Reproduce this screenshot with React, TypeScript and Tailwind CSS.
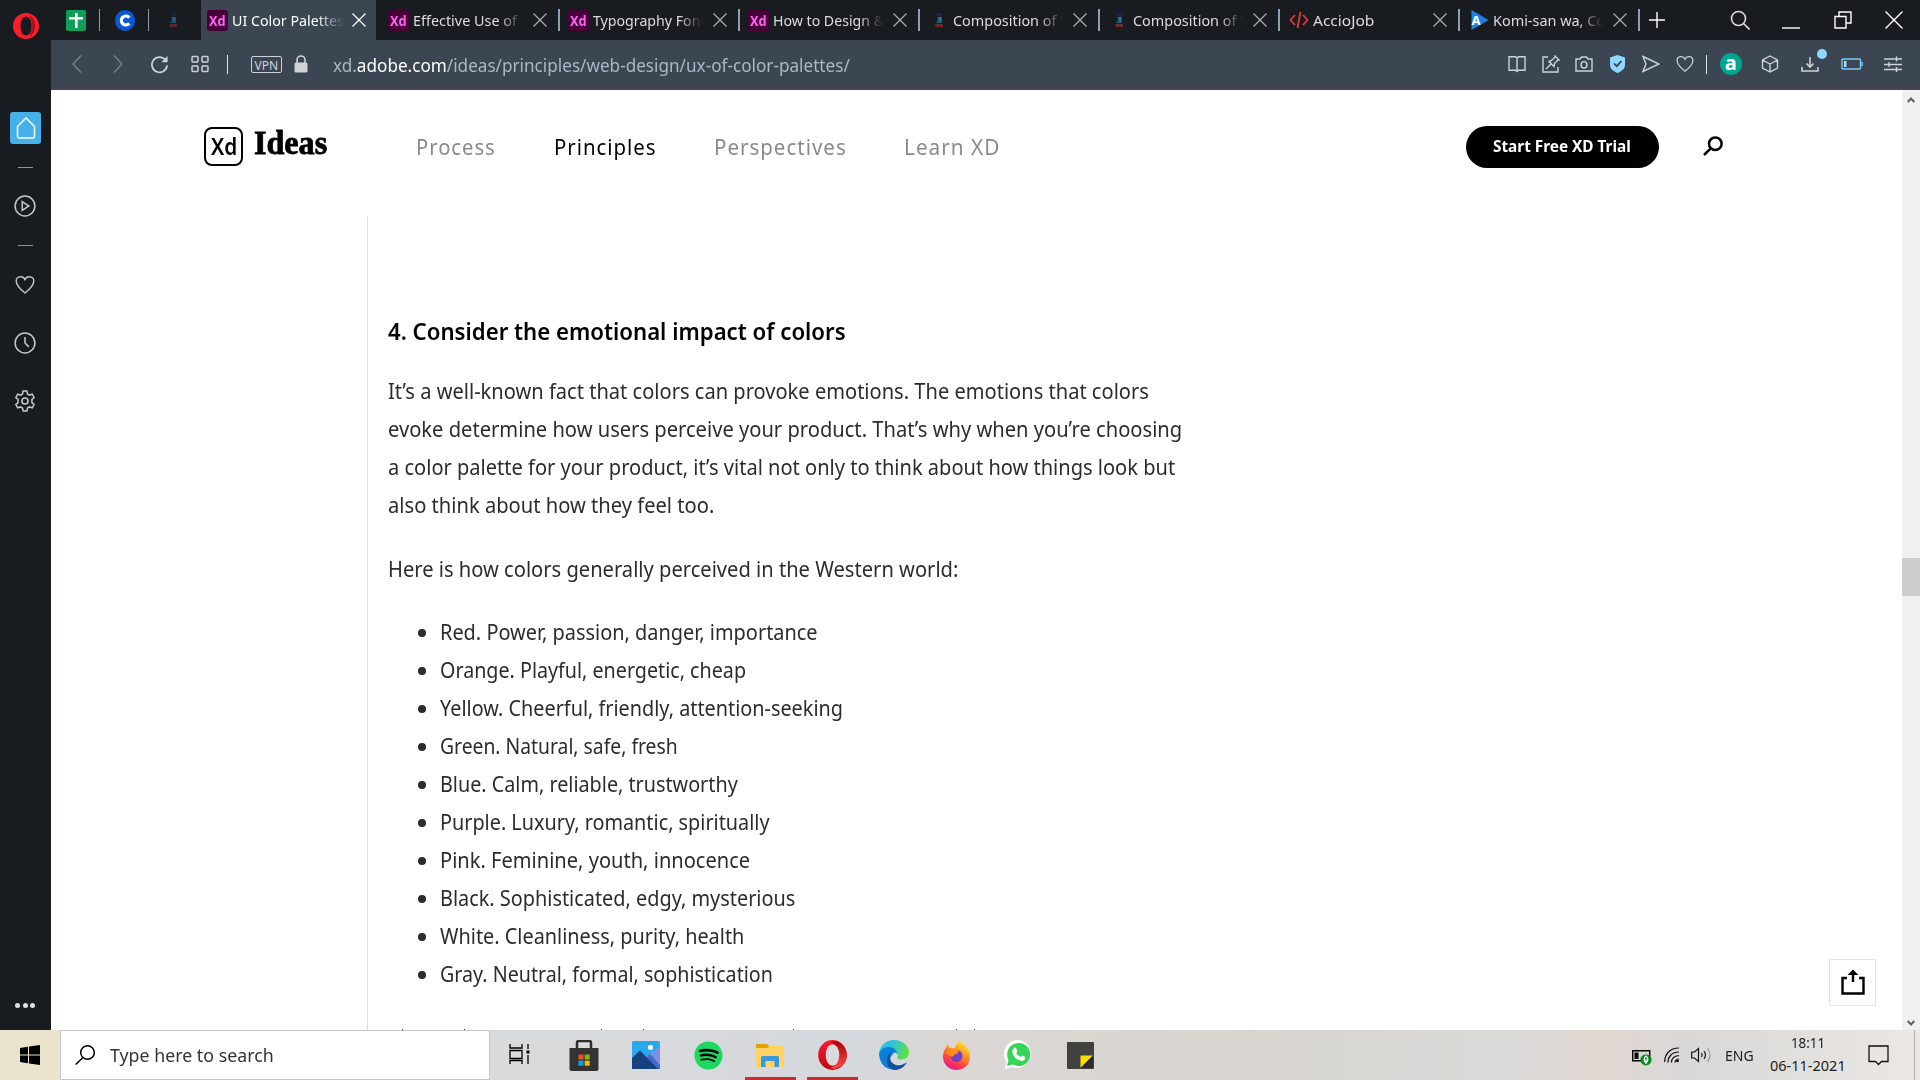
import React, { useLayoutEffect, useRef, useState } from "react";
import type { ReactNode } from "react";
import { FaSpotify } from "react-icons/fa";

/* Text condensed or widened horizontally to a given width. */
function Fit({ w, className = "", children }: { w: number; className?: string; children: ReactNode }) {
  const ref = useRef<HTMLSpanElement>(null);
  const [k, setK] = useState(1);
  useLayoutEffect(() => {
    if (ref.current) setK(w / ref.current.offsetWidth);
  }, [w]);
  return (
    <span className="inline-block shrink-0" style={{ width: w }}>
      <span ref={ref} className={"inline-block origin-left whitespace-pre " + className} style={{ transform: `scaleX(${k})` }}>
        {children}
      </span>
    </span>
  );
}

function Line({ children, size = 20, w = 1.4, className = "", box = "0 0 20 20" }: { children: ReactNode; size?: number; w?: number; className?: string; box?: string }) {
  return (
    <svg width={size} height={size} viewBox={box} fill="none" stroke="currentColor" strokeWidth={w} className={"shrink-0 " + className}>
      {children}
    </svg>
  );
}

const Heart = () => <path d="M10 18 C7 15.5 1.2 11 1.2 6 C1.2 1.2 8 .2 10 4.6 C12 .2 18.8 1.2 18.8 6 C18.8 11 13 15.5 10 18Z" />;

function XdIcon() {
  return (
    <span className="flex h-[21px] w-[21px] shrink-0 items-center justify-center rounded-[3px] bg-[#470137]">
      <Fit w={17} className="text-[15px] leading-[18px] font-bold text-[#ff61f6]">Xd</Fit>
    </span>
  );
}

function Figure() {
  return (
    <svg width="10" height="16" viewBox="0 0 10 16" className="shrink-0">
      <path d="M1 1h7l1 3H3z" fill="#14284f" />
      <path d="M3 5h5v6H2l2-3z" fill="#1a5a83" />
      <path d="M5 5h2v4H5z" fill="#2478a5" />
      <path d="M1 12h8v3H2z" fill="#6e2a2c" />
    </svg>
  );
}

function Close({ active = false }: { active?: boolean }) {
  return (
    <Line size={14} box="0 0 14 14" w={1.3} className={active ? "text-white" : "text-[#a9acaf]"}>
      <path d="M.5 .5 13.5 13.5M13.5 .5 .5 13.5" />
    </Line>
  );
}

const tabs: { icon: ReactNode; text: string; w: number }[] = [
  { icon: <XdIcon />, text: "Effective Use of D", w: 118 },
  { icon: <XdIcon />, text: "Typography Fonts", w: 119 },
  { icon: <XdIcon />, text: "How to Design & ", w: 115 },
  { icon: <span className="flex w-[21px] justify-center"><Figure /></span>, text: "Composition of W", w: 121 },
  { icon: <span className="flex w-[21px] justify-center"><Figure /></span>, text: "Composition of W", w: 121 },
  {
    icon: (
      <svg width="20" height="18" viewBox="0 0 20 18" fill="none" stroke="#e5393c" strokeWidth="1.800"><path d="M6 4 1.5 9 6 14M14 4l4.500 5L14 14M11.500 1 8.500 17" /></svg>
    ),
    text: "AccioJob", w: 61,
  },
  {
    icon: (
      <span className="relative ml-[2px] flex h-[20px] w-[18px] items-center">
        <svg width="18" height="20" viewBox="0 0 18 20" className="absolute inset-0"><path d="M.5 0 17.500 10 .5 20z" fill="#1c82e8" /></svg>
        <span className="relative ml-[1px] text-[13px] leading-[20px] font-bold text-white">A</span>
      </span>
    ),
    text: "Komi-san wa, Com", w: 126,
  },
];

function TabBar() {
  return (
    <div className="flex h-[40px] items-center bg-[#181b20] text-[15px] leading-[20px] text-[#dcdcdc]">
      <div className="flex h-[22px] w-[49px] items-center justify-center border-r border-[#8e9aa7] pl-[2px]">
        <svg width="20" height="21" viewBox="0 0 20 21"><rect width="20" height="21" rx="2" fill="#0f9d58" /><path d="M9 3h2.600v4H17v2.500h-5.400V18H9V9.500H3V7h6z" fill="#fff" /></svg>
      </div>
      <div className="flex h-[22px] w-[49px] items-center justify-center border-r border-[#8e9aa7] pl-[2px]">
        <span className="flex h-[21px] w-[20px] items-center justify-center rounded-full bg-[#0b57d9]">
          <svg width="12" height="13" viewBox="0 0 12 13" fill="none" stroke="#fff" strokeWidth="3.200"><path d="M10.300 3.600a4.500 4.500 0 1 0 0 5.800" /></svg>
        </span>
      </div>
      <div className="flex w-[52px] justify-center pr-[4px] opacity-80"><Figure /></div>
      <div className="mr-[4px] flex h-full w-[175px] items-center bg-[#3b4652] pl-[6px] text-white">
        <XdIcon />
        <div className="ml-[4px] w-[112px] overflow-hidden [mask-image:linear-gradient(to_right,black_75%,transparent)]"><Fit w={112}>UI Color Palettes</Fit></div>
        <div className="ml-[8px] h-[14px]"><Close active /></div>
      </div>
      {tabs.map((t, i) => (
        <div key={i} className="flex h-[22px] w-[180px] items-center border-r-2 border-[#8e9fb2] pl-[8px]">
          <span className="flex w-[21px] justify-center">{t.icon}</span>
          <div className="ml-[4px] w-[110px] overflow-hidden [mask-image:linear-gradient(to_right,black_78%,transparent)]"><Fit w={t.w}>{t.text}</Fit></div>
          <div className="ml-[10px] h-[14px]"><Close /></div>
        </div>
      ))}
      <Line size={16} box="0 0 16 16" className="ml-[9px] text-white"><path d="M8 0v16M0 8h16" /></Line>
      <Line size={20} className="ml-[65px]" w={1.6}><circle cx="8.500" cy="8.500" r="7" /><path d="m13.500 13.500 6 6" /></Line>
      <Line size={18} box="0 0 18 18" className="ml-[32px] text-white"><path d="M0 17h18" /></Line>
      <Line size={18} box="0 0 18 18" className="ml-[34px] text-white"><path d="M1 5.500h11V17H1zM5 5.500V1h12v11h-5" /></Line>
      <Line size={18} box="0 0 18 18" className="ml-[33px] text-white"><path d="m.5.500 17 17M17.500.500l-17 17" /></Line>
    </div>
  );
}

function Cell({ wide = false, children }: { wide?: boolean; children: ReactNode }) {
  return <div className={"relative flex shrink-0 items-center justify-center " + (wide ? "w-[40.500px]" : "w-[33.500px]")}>{children}</div>;
}

function AddressBar() {
  return (
    <div className="flex h-[50px] items-center border-b-2 border-[#45444f] bg-[#3b4652] text-[#cdd3d8]">
      <Line size={18} box="0 0 18 18" className="ml-[17px] text-[#77818c]"><path d="M13 .5 5 9l8 8.500" /></Line>
      <Line size={18} box="0 0 18 18" className="ml-[23px] text-[#77818c]"><path d="m5 .5 8 8.500-8 8.500" /></Line>
      <Line size={19} className="ml-[23px]" w={1.8}><path d="M16.500 5.500A8 8 0 1 0 18 11" /><path d="M18.500 1v6.500H12z" fill="currentColor" stroke="none" /></Line>
      <Line size={18} box="0 0 18 18" className="ml-[22px]" w={1.5}><rect x="1" y="1.500" width="6" height="5.500" rx="1" /><rect x="11" y="1.500" width="6" height="5.500" rx="1" /><rect x="1" y="11" width="6" height="5.500" rx="1" /><rect x="11" y="11" width="6" height="5.500" rx="1" /></Line>
      <div className="ml-[18px] h-[19px] w-px bg-[#dfe3e6]" />
      <div className="ml-[23px] flex h-[17px] w-[31px] items-center justify-center rounded-[2px] border border-[#cdd3d8]"><Fit w={24} className="text-[12px] leading-[15px]">VPN</Fit></div>
      <svg width="14" height="18" viewBox="0 0 14 18" className="ml-[12px]"><path d="M3 8V5a4 4 0 0 1 8 0v3" fill="none" stroke="#cdd3d8" strokeWidth="1.600" /><rect x=".5" y="7.500" width="13" height="10" rx="1.500" fill="#cdd3d8" /></svg>
      <div className="mt-[1px] ml-[25px] text-[17.500px] leading-[24px] text-[#a9b7c6]"><Fit w={517}>xd.<span className="text-white">adobe.com</span>/ideas/principles/web-design/ux-of-color-palettes/</Fit></div>
      <div className="ml-auto mr-[7px] flex items-center">
        <Cell><Line size={18} box="0 0 18 18"><path d="M9 3 7.500 1.700H1v13.600h6.500L9 16.500l1.500-1.200H17V1.700h-6.500zM9 3v13" /></Line></Cell>
        <Cell><Line size={18} box="0 0 18 18"><path d="M6 2H1v15h15v-5M4 14l5-5M7 6.500l5 5 .5-3L16 5l1 0-4-4v1L9.500 5.500z" /></Line></Cell>
        <Cell><Line size={18} box="0 0 18 18"><path d="M1 4h4l1.500-2h5L13 4h4v12H1z" /><ellipse cx="9" cy="9.800" rx="3" ry="3.200" /></Line></Cell>
        <Cell><svg width="17" height="18" viewBox="0 0 17 18"><path d="M8.500 0 16 2.500V10c0 4-4 6.500-7.500 8C5 16.500 1 14 1 10V2.500z" fill="#8fd7ff" /><path d="m5 8.500 2.700 2.700L12.500 6" fill="none" stroke="#34404b" strokeWidth="1.700" /></svg></Cell>
        <Cell><Line size={18} box="0 0 18 18"><path d="M1 1.500 17 9 1 16.500 4 9z" /></Line></Cell>
        <Cell><Line size={18}><Heart /></Line></Cell>
        <div className="ml-[4px] mr-[4px] h-[19px] w-px bg-[#dfe3e6]" />
        <Cell wide><span className="flex h-[22px] w-[22px] items-center justify-center rounded-full bg-[#00a693] pb-[3px] text-[20px] leading-[20px] font-bold text-white">a</span></Cell>
        <Cell wide><Line size={18} box="0 0 18 18" className="-ml-[3px]"><path d="m9 1 7.500 4v8L9 17l-7.500-4V5zM1.500 5 9 9l7.500-4M9 9v8" /></Line></Cell>
        <Cell wide>
          <Line size={18} box="0 0 18 18" w={1.600} className="-ml-[3px]"><path d="M9 2v10M5.500 8.500 9 12l3.500-3.500M1 12v4h16v-4" /></Line>
          <span className="absolute -top-[6px] right-[5px] h-[10px] w-[10px] rounded-full bg-[#8fd7ff]" />
        </Cell>
        <Cell wide>
          <svg width="22" height="12" viewBox="0 0 22 12" fill="none" stroke="#7dc9f5" strokeWidth="1.400"><rect x="1" y="1" width="18.500" height="10" rx="1" /><path d="M21 4v4" /><path d="M3 3h2.500v6H3z" fill="#a6dcfb" stroke="none" /></svg>
        </Cell>
        <Cell wide><Line size={18} box="0 0 18 18"><path d="M0 4h18M0 9.500h18M0 14.500h18M12.500 1.500v5M5 7v5M12.500 12v5" /></Line></Cell>
      </div>
    </div>
  );
}

function Sidebar() {
  return (
    <div className="flex h-full w-[51px] shrink-0 flex-col items-center bg-[#181b20] pr-[1px] text-[#c3c7cb]">
      <svg width="26" height="26" viewBox="0 0 26 26" className="mt-[13px] ml-[1px]"><path fillRule="evenodd" d="M13 0a13 13 0 1 0 0 26 13 13 0 0 0 0-26zm0 3.500c3.300 0 5.500 4 5.500 9.500s-2.200 9.500-5.500 9.500S7.500 18.500 7.500 13 9.700 3.500 13 3.500z" fill="#fa1e2d" /><path d="M16 2.500c8 2 9 18 0 21 3-3 4-17 0-21z" fill="#b0101c" /></svg>
      <div className="mt-[73px] ml-[1px] flex h-[32px] w-[31px] items-center justify-center rounded-[3px] bg-[#45b1e8] text-white">
        <svg width="20" height="22" viewBox="0 0 20 22" fill="none" stroke="currentColor" strokeWidth="1.500"><path d="M10 1 18.500 9.500V19q0 2-2 2h-13q-2 0-2-2V9.500z" /></svg>
      </div>
      <div className="mt-[23px] ml-[1px] h-px w-[15px] bg-[#8a949d]" />
      <Line size={22} box="0 0 20 20" className="mt-[27px]"><circle cx="10" cy="10" r="9" /><path d="m7.500 6 6 4-6 4z" /></Line>
      <div className="mt-[28px] ml-[1px] h-px w-[15px] bg-[#8a949d]" />
      <Line size={20} className="mt-[29px]"><Heart /></Line>
      <Line size={22} box="0 0 20 20" className="mt-[37px]"><circle cx="10" cy="10" r="9" /><path d="M10 4.500V10l3.500 3.500" /></Line>
      <Line size={22} box="0 0 20 20" className="mt-[36px]"><path d="M8.300 1h3.400l.6 2.600 1.700 1 2.600-.8 1.700 3-2 1.800v2.800l2 1.800-1.700 3-2.600-.8-1.700 1-.6 2.600H8.300l-.6-2.600-1.700-1-2.600.8-1.700-3 2-1.800V8.600l-2-1.800 1.700-3 2.600.8 1.700-1z" /><circle cx="10" cy="10" r="2.800" /></Line>
      <div className="mt-auto mb-[22px] flex gap-[2.500px]">
        <i className="h-[5px] w-[5px] rounded-full bg-[#dfe2e4]" /><i className="h-[5px] w-[5px] rounded-full bg-[#dfe2e4]" /><i className="h-[5px] w-[5px] rounded-full bg-[#dfe2e4]" />
      </div>
    </div>
  );
}

const colors: [string, number][] = [
  ["Red. Power, passion, danger, importance", 378],
  ["Orange. Playful, energetic, cheap", 306],
  ["Yellow. Cheerful, friendly, attention-seeking", 403],
  ["Green. Natural, safe, fresh", 238],
  ["Blue. Calm, reliable, trustworthy", 298],
  ["Purple. Luxury, romantic, spiritually", 330],
  ["Pink. Feminine, youth, innocence", 310],
  ["Black. Sophisticated, edgy, mysterious", 355],
  ["White. Cleanliness, purity, health", 304],
  ["Gray. Neutral, formal, sophistication", 333],
];

const tips = [14, 61, 136, 41, 149, 162, 17];

function Page() {
  return (
    <div className="relative flex min-h-0 flex-1 flex-col overflow-hidden bg-white">
      <header className="flex h-[126px] shrink-0 items-start pl-[153px] text-[21px] leading-[30px]">
        <div className="mt-[37px] flex h-[39px] w-[39px] items-center justify-center rounded-[8px] border-[2.500px] border-black"><div className="-mt-[2px] flex"><Fit w={26} className="text-[24px] leading-[32px] font-semibold text-black">Xd</Fit></div></div>
        <div className="mt-[33px] ml-[11px] font-['Liberation_Serif',serif] text-[33px] leading-[40px] font-bold text-black [-webkit-text-stroke:0.800px_black]"><Fit w={73}>Ideas</Fit></div>
        <nav className="mt-[42px] ml-[89px] flex text-[#8a8a8a]">
          <Fit w={80} className="tracking-[1px]">Process</Fit>
          <span className="ml-[58px] text-black"><Fit w={103} className="tracking-[1px]">Principles</Fit></span>
          <span className="ml-[57px]"><Fit w={133} className="tracking-[1px]">Perspectives</Fit></span>
          <span className="ml-[57px]"><Fit w={96} className="tracking-[1px]">Learn XD</Fit></span>
        </nav>
        <div className="mt-[36px] ml-[466px] flex h-[42px] w-[193px] shrink-0 items-center justify-center rounded-full bg-black text-[16px] leading-[22px] font-bold text-white"><div className="-mt-[2px] mr-[2px] flex"><Fit w={138}>Start Free XD Trial</Fit></div></div>
        <Line size={20} w={2.500} className="mt-[46px] ml-[44px] text-black"><circle cx="12.300" cy="7.700" r="6.300" /><path d="M7.800 12.300 1 19" /></Line>
      </header>
      <article className="ml-[316px] flex-1 overflow-hidden border-l border-[#dedede] pl-[20px] text-[21.500px] leading-[38px] text-[#2c2c2c]">
        <h3 className="mt-[96px] text-[23.500px] font-semibold text-black"><Fit w={458}>4. Consider the emotional impact of colors</Fit></h3>
        <div className="mt-[22px] flex flex-col">
          <Fit w={761}>It’s a well-known fact that colors can provoke emotions. The emotions that colors</Fit>
          <Fit w={794}>evoke determine how users perceive your product. That’s why when you’re choosing</Fit>
          <Fit w={787}>a color palette for your product, it’s vital not only to think about how things look but</Fit>
          <Fit w={326}>also think about how they feel too.</Fit>
        </div>
        <div className="mt-[26px] flex"><Fit w={570}>Here is how colors generally perceived in the Western world:</Fit></div>
        <ul className="mt-[25px] flex flex-col pl-[30px]">
          {colors.map(([t, w]) => (
            <li key={t} className="flex items-center">
              <span className="mt-[1px] mr-[14px] h-[8px] w-[8px] rounded-full bg-[#2c2c2c]" />
              <Fit w={w}>{t}</Fit>
            </li>
          ))}
        </ul>
        <div className="mt-[36px] flex h-px">{tips.map((m, i) => <i key={i} className="h-px w-px bg-[#3c3c3c]" style={{ marginLeft: m }} />)}</div>
      </article>
      <button className="absolute right-[26px] bottom-[24px] flex h-[47px] w-[47px] items-center justify-center border border-[#e4e4e4] bg-white pb-[2px] text-black">
        <svg width="24" height="26" viewBox="0 0 24 26" fill="none" stroke="currentColor" strokeWidth="2.400"><path d="M6 9H1.500v15.500h21V9H18M12 13V4" /><path d="m12 .5 5.500 5.500h-11z" fill="currentColor" stroke="none" /></svg>
      </button>
    </div>
  );
}

function Scrollbar() {
  return (
    <div className="flex h-full w-[18px] flex-col items-center bg-[#f0f0f0] text-[#606060]">
      <Line size={8} box="0 0 8 8" w={2} className="mt-[6px]"><path d="m.700 6 3.300-3.500L7.300 6" /></Line>
      <div className="mt-[454px] h-[38px] w-full bg-[#cdcdcd]" />
      <Line size={8} box="0 0 8 8" w={2} className="mt-auto mb-[3px]"><path d="m.700 2 3.300 3.500L7.300 2" /></Line>
    </div>
  );
}

function TaskApp({ run = false, children }: { run?: boolean; children: ReactNode }) {
  return (
    <div className="relative flex h-full w-[62px] shrink-0 items-center justify-center pl-[2px]">
      {children}
      {run && <span className="absolute bottom-0 left-[7px] h-[3px] w-[51px] bg-[#cc2b2b]" />}
    </div>
  );
}

function Taskbar() {
  return (
    <div className="flex h-[50px] shrink-0 items-center bg-[linear-gradient(to_right,#e9e4cb_0px,#e9e4cb_60px,#d9dadb_489px,#d5d8dd_860px,#dad7d4_950px,#d8d5d1_1250px,#d9d9d7_1500px,#e0d7d2_1600px,#d9d8d6_1690px,#ebe8e4_1920px)]">
      <div className="flex w-[60px] justify-center"><svg width="20" height="20" viewBox="0 0 20 20"><path d="M0 3l8-1.200V9.500H0zM9 1.600 20 0v9.500H9zM0 10.500h8v7.700L0 17zM9 10.500h11V20L9 18.400z" /></svg></div>
      <div className="flex h-[50px] w-[430px] items-center border border-[#c8c8c8] bg-white pl-[14px] text-[18px] leading-[24px] text-[#333]">
        <Line size={20} className="text-black" w={1.500}><circle cx="12.500" cy="7.500" r="6.800" /><path d="M8 12.500 .7 19.500" /></Line>
        <span className="-mt-[1px] ml-[15px] flex"><Fit w={164}>Type here to search</Fit></span>
      </div>
      <div className="flex w-[62px] justify-center">
        <svg width="22" height="20" viewBox="0 0 22 20" fill="none" stroke="#000" strokeWidth="1.300" className="-mt-[2px] -ml-[2px]"><path d="M1 0v4h12V0M1 6.500h12v8H1zM1 20v-3.500h12V20M19 0v5M19 11v9" /><path d="M17.500 6.500h3v3h-3z" fill="#000" stroke="none" /></svg>
      </div>
      <TaskApp>
        <svg width="30" height="31" viewBox="0 0 30 31"><path d="M8 9V3q0-2 2-2h10q2 0 2 2v6" fill="none" stroke="#2d2d2d" strokeWidth="2.500" /><path d="M.5 8h29v21q0 2-2 2h-25q-2 0-2-2z" fill="#333" /><path d="M9.500 14.500h5v5h-5z" fill="#f25022" /><path d="M15.700 14.500h5v5h-5z" fill="#7fba00" /><path d="M9.500 20.700h5v5h-5z" fill="#00a4ef" /><path d="M15.700 20.700h5v5h-5z" fill="#ffb900" /></svg>
      </TaskApp>
      <TaskApp>
        <svg width="28" height="28" viewBox="0 0 28 28"><rect width="28" height="28" rx="1.500" fill="#29a8ea" /><path d="M13 16 28 6v22H13z" fill="#7d8fe0" /><path d="m14 17 4-4 10 11v4H20z" fill="#3f6bcb" /><path d="M0 17 8 9.500 26 28H0z" fill="#15417f" /><rect x="16" y="4" width="5" height="5" rx="2" fill="#fff" /></svg>
      </TaskApp>
      <TaskApp><span className="flex h-[26px] w-[26px] items-center justify-center rounded-full bg-black"><FaSpotify className="h-[29px] w-[29px] shrink-0 text-[#1ed760]" /></span></TaskApp>
      <TaskApp run>
        <svg width="28" height="25" viewBox="0 0 28 25"><path d="M0 1h11l2 2v4H0z" fill="#dfa20a" /><path d="M0 5h11l3-2h14v20q0 1-1 1H1q-1 0-1-1z" fill="#ffd462" /><path d="M5 24V14.500q0-1.500 1.500-1.500h15q1.500 0 1.500 1.500V24h-4.500v-6h-9v6z" fill="#3d97db" /></svg>
      </TaskApp>
      <TaskApp run>
        <svg width="29" height="30" viewBox="0 0 29 30"><defs><linearGradient id="op" x1="0" y1="0" x2="0" y2="1"><stop stopColor="#ff1b2d" /><stop offset="1" stopColor="#b70912" /></linearGradient><linearGradient id="op2" x1="0" y1="0" x2="0" y2="1"><stop stopColor="#a00" /><stop offset="1" stopColor="#ff4b4b" /></linearGradient></defs><ellipse cx="14.500" cy="15" rx="14.300" ry="15" fill="url(#op)" /><path d="M12 2C20-1 28.800 6 28.800 15S20 31 12 28c9-1 12-24 0-26z" fill="url(#op2)" /><ellipse cx="14.500" cy="15" rx="6.800" ry="10.800" fill="#d8dade" /></svg>
      </TaskApp>
      <TaskApp>
        <svg width="30" height="30" viewBox="0 0 30 30"><defs><linearGradient id="e1" x1="0" y1="0" x2="1" y2=".3"><stop stopColor="#35b9f1" /><stop offset=".5" stopColor="#2fc5d6" /><stop offset="1" stopColor="#62dd4c" /></linearGradient></defs><path d="M0 14C1 5 7 0 15 0c9 0 15 6 15 12.500 0 4-3 7-7.500 7-4 0-5-1.500-4-3C20 13 17 8 11 8 5 8 1 11 0 14z" fill="url(#e1)" /><path d="M0 14c1-4 5-7 10-7 6 0 9 5 8.500 8.500-3-3.500-8 0-7 5C12 26 18 29 22 27c-7 5-21 3-22-13z" fill="#087fdb" /><path d="M13 12c-3 3-3 8 .5 11 4 3.500 9 3 14.500-1-3 6-8 8-12.500 8C10 29 7 24 8 19c.5-3 2-6 5-7z" fill="#10509b" /><path d="M15 12.500q3.500 0 3.500 3-1.500 3 1 4.500-6 0-6-4 0-3 1.500-3.500z" fill="#d9dadc" /></svg>
      </TaskApp>
      <TaskApp>
        <svg width="29" height="30" viewBox="0 0 29 30"><defs><linearGradient id="ff" x1=".8" y1="0" x2=".3" y2="1"><stop stopColor="#fff036" /><stop offset=".4" stopColor="#ff9a1f" /><stop offset=".75" stopColor="#ff3b4b" /><stop offset="1" stopColor="#e01698" /></linearGradient></defs><path d="M18 0c1 3 4 4 6 7 2 0 4 5 4 10 0 8-6 13-13.500 13S1 24 1 17c0-4 1-7 3-9l1-4 3 4c2-.5 3 0 4 .5C14 6 15 2 18 0z" fill="url(#ff)" /><circle cx="14.500" cy="16" r="6" fill="#7440c8" /><path d="M4 13c2-5 6-4 9-3l5-1-3 5c-3 0-3 2-5 3-2-1-4-3-6-4z" fill="#ff8a1c" /></svg>
      </TaskApp>
      <TaskApp>
        <svg width="29" height="30" viewBox="0 0 29 30"><path d="M14.500 0a14 14 0 1 1-6.500 27L.5 29.500 2.500 22A14 14 0 0 1 14.500 0z" fill="#fff" /><circle cx="14.700" cy="14.500" r="11.500" fill="#35d557" /><path d="m3 26 2-8 6 6z" fill="#35d557" /><path d="M9.500 8.500q2-2 3 .5l1 2.200-1.300 1.800q1.300 2.800 4.300 4l1.700-1.500 3 1.500q.5 3.500-3.500 4C12.500 20.500 8 15 8.300 11q.3-1.500 1.200-2.500z" fill="#fff" /></svg>
      </TaskApp>
      <TaskApp><svg width="27" height="27" viewBox="0 0 27 27"><rect width="27" height="27" rx="1" fill="#414141" /><path d="M13.500 13.500H26L13.500 26z" fill="#ffdd00" /><path d="M26 13.500V26H13.500z" fill="#2d2d2d" /></svg></TaskApp>
      <div className="ml-auto flex h-full items-center text-[15px] text-[#1c1c1c]">
        <svg width="20" height="17" viewBox="0 0 20 17" className="mt-[4px]"><path d="M.7 1.700h17v10H.7z" fill="none" stroke="#000" strokeWidth="1.400" /><path d="M2.500 3.500h4v6.500h-4z" /><circle cx="14" cy="10.800" r="5.600" fill="#0a8a20" /><path d="M14 7c2.500 2 2.500 5 0 6.500-2.500-1.500-2.500-4.500 0-6.500zm0 3v5" fill="none" stroke="#fff" strokeWidth="1.200" /></svg>
        <svg width="16" height="16" viewBox="0 0 16 16" fill="none" stroke="#111" strokeWidth="1.200" className="ml-[12px]"><path d="M.7 15C.7 7 6 1 15 1M4 15.500C4 9.500 8 5 15 5M7.500 15.500C7.500 11.500 10 9 15 8.500M11 15.500q0-3 4-3.500" /><circle cx="13.500" cy="14" r="1.300" fill="#000" stroke="none" /></svg>
        <svg width="21" height="18" viewBox="0 0 21 18" fill="none" stroke="#111" strokeWidth="1.200" className="ml-[11px]"><path d="M.7 6H3.500L7.500 2.500v13L3.500 12H.7zM10.500 7q1.500 2 0 4M13 5q3 4 0 8" /><path d="M16.500 2q5 7 0 14" stroke="#999" /></svg>
        <span className="ml-[13px] flex leading-[20px]"><Fit w={29}>ENG</Fit></span>
        <div className="ml-[15px] flex h-full w-[78px] flex-col items-center text-[14.500px] leading-[23px]"><span className="mt-[1px] flex"><Fit w={34}>18:11</Fit></span><Fit w={76}>06-11-2021</Fit></div>
        <svg width="21" height="21" viewBox="0 0 21 21" fill="none" stroke="#111" strokeWidth="1.300" className="ml-[21px]"><path d="M1 1h19v15.500h-6.500l-3 3-3-3H1z" /></svg>
        <div className="mr-[5px] ml-[25px] h-full w-px bg-[#b4b2b0]" />
      </div>
    </div>
  );
}

export default function App() {
  return (
    <div className="flex h-[1080px] w-[1920px] flex-col overflow-hidden font-['Noto_Sans','Open_Sans',sans-serif]">
      <div className="flex min-h-0 flex-1">
        <Sidebar />
        <div className="flex w-[1869px] flex-col">
          <TabBar />
          <AddressBar />
          <div className="flex min-h-0 flex-1">
            <Page />
            <Scrollbar />
          </div>
        </div>
      </div>
      <Taskbar />
    </div>
  );
}
